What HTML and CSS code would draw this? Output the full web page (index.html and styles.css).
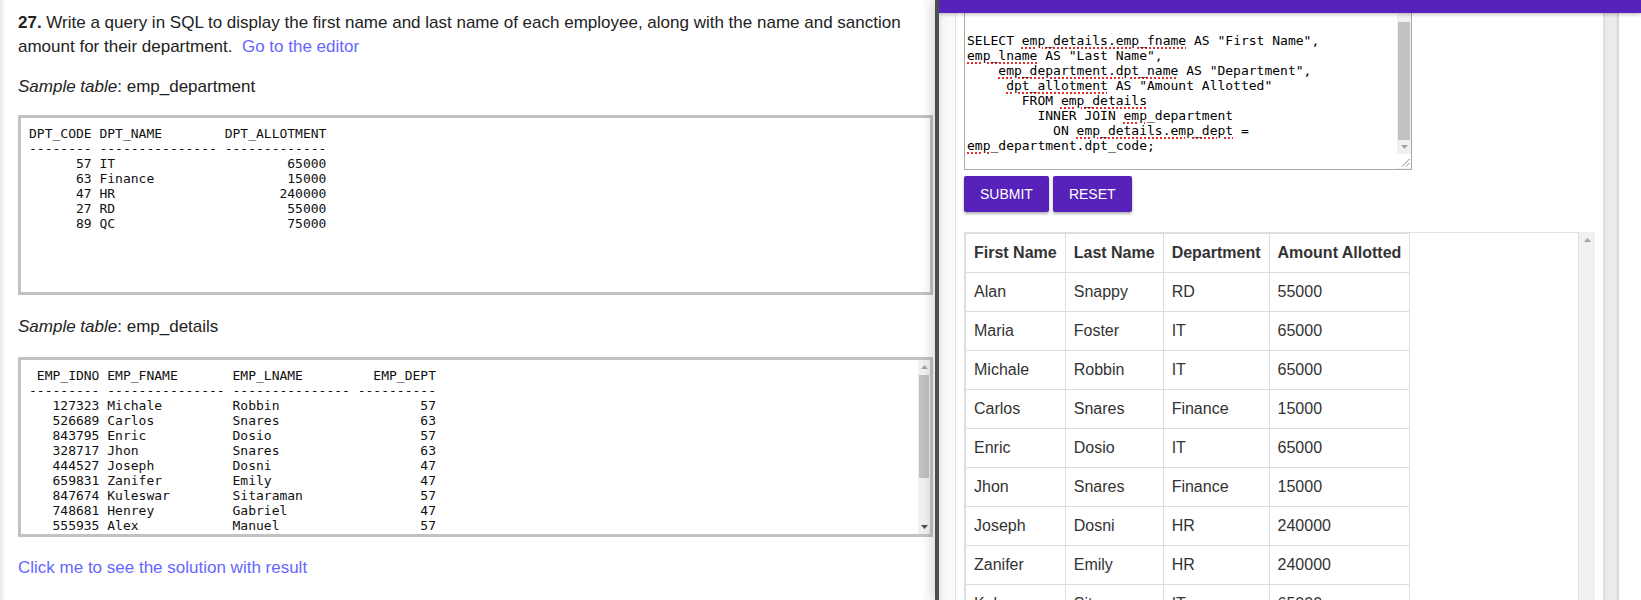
FILE: index.html
```html
<!DOCTYPE html>
<html lang="en">
<head>
<meta charset="utf-8">
<title>SQL Exercise 27</title>
<link rel="stylesheet" href="styles.css">
</head>
<body>
<div class="page">
  <main class="left">
    <p class="question"><strong>27.</strong> Write a query in SQL to display the first name and last name of each employee, along with the name and sanction amount for their department.&nbsp; <a class="link" href="#editor">Go to the editor</a></p>
    <p class="sample"><em>Sample table</em>: emp_department</p>
    <div class="sample-box box-dept"><pre class="sample-text">DPT_CODE DPT_NAME        DPT_ALLOTMENT
-------- --------------- -------------
      57 IT                      65000
      63 Finance                 15000
      47 HR                     240000
      27 RD                      55000
      89 QC                      75000</pre></div>
    <p class="sample sample-2"><em>Sample table</em>: emp_details</p>
    <div class="sample-box box-details"><pre class="sample-text"> EMP_IDNO EMP_FNAME       EMP_LNAME         EMP_DEPT
--------- --------------- --------------- ----------
   127323 Michale         Robbin                  57
   526689 Carlos          Snares                  63
   843795 Enric           Dosio                   57
   328717 Jhon            Snares                  63
   444527 Joseph          Dosni                   47
   659831 Zanifer         Emily                   47
   847674 Kuleswar        Sitaraman               57
   748681 Henrey          Gabriel                 47
   555935 Alex            Manuel                  57
   539569 George          Mardy                   27
   733843 Mario           Saule                   63
   631548 Alan            Snappy                  27
   839139 Maria           Foster                  57</pre><div class="vscroll vscroll-box">
        <div class="sb-btn"><svg width="7" height="4" viewBox="0 0 7 4"><polygon points="0,4 3.5,0 7,4" fill="#a3a3a3"/></svg></div>
        <div class="sb-thumb sb-thumb-box"></div>
        <div class="sb-fill"></div>
        <div class="sb-btn"><svg width="7" height="4" viewBox="0 0 7 4"><polygon points="0,0 7,0 3.5,4" fill="#505050"/></svg></div>
      </div></div>
    <p class="solution"><a class="link" href="#solution">Click me to see the solution with result</a></p>
  </main>

  <aside class="editor-panel" id="editor">
    <div class="panel-header"></div>
    <div class="panel-body">
      <div class="gutter"></div>
      <div class="card">
        <div class="editor">
          <div class="code">SELECT <span class="sp">emp_details.emp_fname</span> AS "First Name", 
<span class="sp">emp_lname</span> AS "Last Name",
    <span class="sp">emp_department.dpt_name</span> AS "Department",
     <span class="sp">dpt_allotment</span> AS "Amount Allotted"
       FROM <span class="sp">emp_details</span>
         INNER JOIN <span class="sp">emp</span>_department
           ON <span class="sp">emp_details.emp_dept</span> = 
<span class="sp">emp</span>_department.dpt_code;</div>
          <div class="vscroll vscroll-editor">
            <div class="sb-thumb sb-thumb-editor"></div>
            <div class="sb-btn"><svg width="7" height="4" viewBox="0 0 7 4"><polygon points="0,0 7,0 3.5,4" fill="#a3a3a3"/></svg></div>
            <div class="resizer"><svg width="14" height="14" viewBox="0 0 14 14"><line x1="12.5" y1="5" x2="5" y2="12.5" stroke="#8a8a8a" stroke-width="1"/><line x1="12.5" y1="9" x2="9" y2="12.5" stroke="#8a8a8a" stroke-width="1"/></svg></div>
          </div>
        </div>
        <div class="buttons">
          <button class="btn" type="button">SUBMIT</button>
          <button class="btn" type="button">RESET</button>
        </div>
        <div class="result">
          <div class="result-area">
            <table class="result-table">
              <thead>
                <tr><th>First Name</th><th>Last Name</th><th>Department</th><th>Amount Allotted</th></tr>
              </thead>
              <tbody>
                <tr><td>Alan</td><td>Snappy</td><td>RD</td><td>55000</td></tr>
                <tr><td>Maria</td><td>Foster</td><td>IT</td><td>65000</td></tr>
                <tr><td>Michale</td><td>Robbin</td><td>IT</td><td>65000</td></tr>
                <tr><td>Carlos</td><td>Snares</td><td>Finance</td><td>15000</td></tr>
                <tr><td>Enric</td><td>Dosio</td><td>IT</td><td>65000</td></tr>
                <tr><td>Jhon</td><td>Snares</td><td>Finance</td><td>15000</td></tr>
                <tr><td>Joseph</td><td>Dosni</td><td>HR</td><td>240000</td></tr>
                <tr><td>Zanifer</td><td>Emily</td><td>HR</td><td>240000</td></tr>
                <tr><td>Kuleswar</td><td>Sitaraman</td><td>IT</td><td>65000</td></tr>
                <tr><td>Henrey</td><td>Gabriel</td><td>HR</td><td>240000</td></tr>
              </tbody>
            </table>
          </div>
          <div class="result-track">
            <div class="sb-btn sb-btn-wide"><svg width="7" height="4" viewBox="0 0 7 4"><polygon points="0,4 3.5,0 7,4" fill="#a3a3a3"/></svg></div>
          </div>
        </div>
      </div>
      <div class="band"></div>
      <div class="edge"></div>
    </div>
  </aside>
</div>
</body>
</html>
```
FILE: styles.css
```css
* {
  box-sizing: border-box;
}

html,
body {
  margin: 0;
  padding: 0;
}

body {
  width: 1641px;
  height: 600px;
  overflow: hidden;
  background: #fff;
  font-family: "Liberation Sans", Arial, sans-serif;
}

.page {
  display: flex;
  height: 600px;
}

/* ---------- left: exercise text ---------- */
.left {
  width: 935px;
  flex: none;
  padding: 11px 2px 0 18px;
  background: linear-gradient(to right, #e6e6e6 0, #f6f6f6 3px, #fff 6px);
  color: #222;
  font-size: 17px;
  line-height: 24px;
}

.question {
  margin: 0;
}

.link {
  color: #6666ff;
  text-decoration: none;
}

.sample {
  margin: 16px 0 0;
}

.sample-2 {
  margin-top: 20px;
}

.sample-box {
  margin-top: 16px;
  height: 180px;
  border: 3px solid #c2c2c2;
  background: #fff;
  display: flex;
  overflow: hidden;
}

.box-details {
  margin-top: 18px;
}

.sample-text {
  flex: 1;
  margin: 0;
  padding: 8px;
  font-family: "DejaVu Sans Mono", monospace;
  font-size: 13px;
  line-height: 15px;
  color: #111;
  overflow: hidden;
}

.solution {
  margin: 19px 0 0;
}

/* ---------- scrollbars ---------- */
.vscroll {
  flex: none;
  display: flex;
  flex-direction: column;
  background: #f1f1f1;
}

.vscroll-box {
  width: 12px;
}

.vscroll-editor {
  width: 14px;
  padding-top: 9px;
}

.sb-btn {
  height: 14px;
  flex: none;
  display: flex;
  align-items: center;
  justify-content: center;
}

.sb-btn-wide {
  height: 16px;
}

.sb-thumb {
  flex: none;
  background: #c1c1c1;
}

.sb-thumb-box {
  height: 103px;
  margin: 1px 1px 0;
}

.sb-thumb-editor {
  height: 118px;
  margin: 0 1px;
}

.sb-fill {
  flex: 1;
}

.resizer {
  height: 14px;
  flex: none;
  background: #fff;
  display: flex;
}

/* ---------- right: editor panel ---------- */
.editor-panel {
  flex: 1;
  position: relative;
  z-index: 1;
  display: flex;
  flex-direction: column;
  overflow: hidden;
  background: #fff;
  border-left: 4px solid #4e4e4e;
  box-shadow: -5px 0 10px rgba(0, 0, 0, 0.13);
}

.panel-header {
  height: 13px;
  flex: none;
  position: relative;
  z-index: 2;
  background: #5622b9;
  box-shadow: 0 1px 4px rgba(0, 0, 0, 0.3);
}

.panel-body {
  flex: 1;
  min-height: 0;
  display: flex;
}

.gutter {
  width: 16px;
  flex: none;
  background: linear-gradient(to right, #e9e9e9 0, #f7f7f7 5px, #fbfbfb 100%);
}

.card {
  width: 648px;
  flex: none;
  border-left: 1px solid #e2e2e2;
  padding: 0 8px;
  background: #fff;
}

.editor {
  width: 448px;
  height: 157px;
  display: flex;
  border: 1px solid #a9a9a9;
  border-top: none;
  background: #fff;
}

.code {
  flex: 1;
  padding: 20px 2px 0;
  font-family: "DejaVu Sans Mono", monospace;
  font-size: 13px;
  line-height: 15px;
  color: #000;
  white-space: pre;
  overflow: hidden;
}

.sp {
  text-decoration: underline dotted #e03030;
  text-decoration-thickness: 1.5px;
  text-underline-offset: 2px;
}

.buttons {
  display: flex;
  gap: 4px;
  margin-top: 6px;
}

.btn {
  height: 36px;
  padding: 0 16px;
  border: none;
  border-radius: 2px;
  background: #5622b9;
  color: #fff;
  font-family: "Liberation Sans", Arial, sans-serif;
  font-size: 14px;
  box-shadow: 0 2px 3px rgba(0, 0, 0, 0.3);
}

.result {
  margin-top: 20px;
  height: 420px;
  display: flex;
}

.result-area {
  flex: 1;
  border: 1px solid #e0e0e0;
  border-bottom: none;
}

.result-track {
  width: 16px;
  flex: none;
  background: #f1f1f1;
}

.result-table {
  border-collapse: collapse;
  font-size: 16px;
  line-height: 22px;
  color: #333;
}

.result-table th,
.result-table td {
  border: 1px solid #ddd;
  padding: 8px;
  text-align: left;
}

.result-table th {
  font-weight: bold;
}

.band {
  width: 16px;
  flex: none;
  background: linear-gradient(to right, #dadada 0, #ebebeb 3px, #ececec 12px, #d6d6d6 16px);
}

.edge {
  flex: 1;
  background: #fff;
}
```
